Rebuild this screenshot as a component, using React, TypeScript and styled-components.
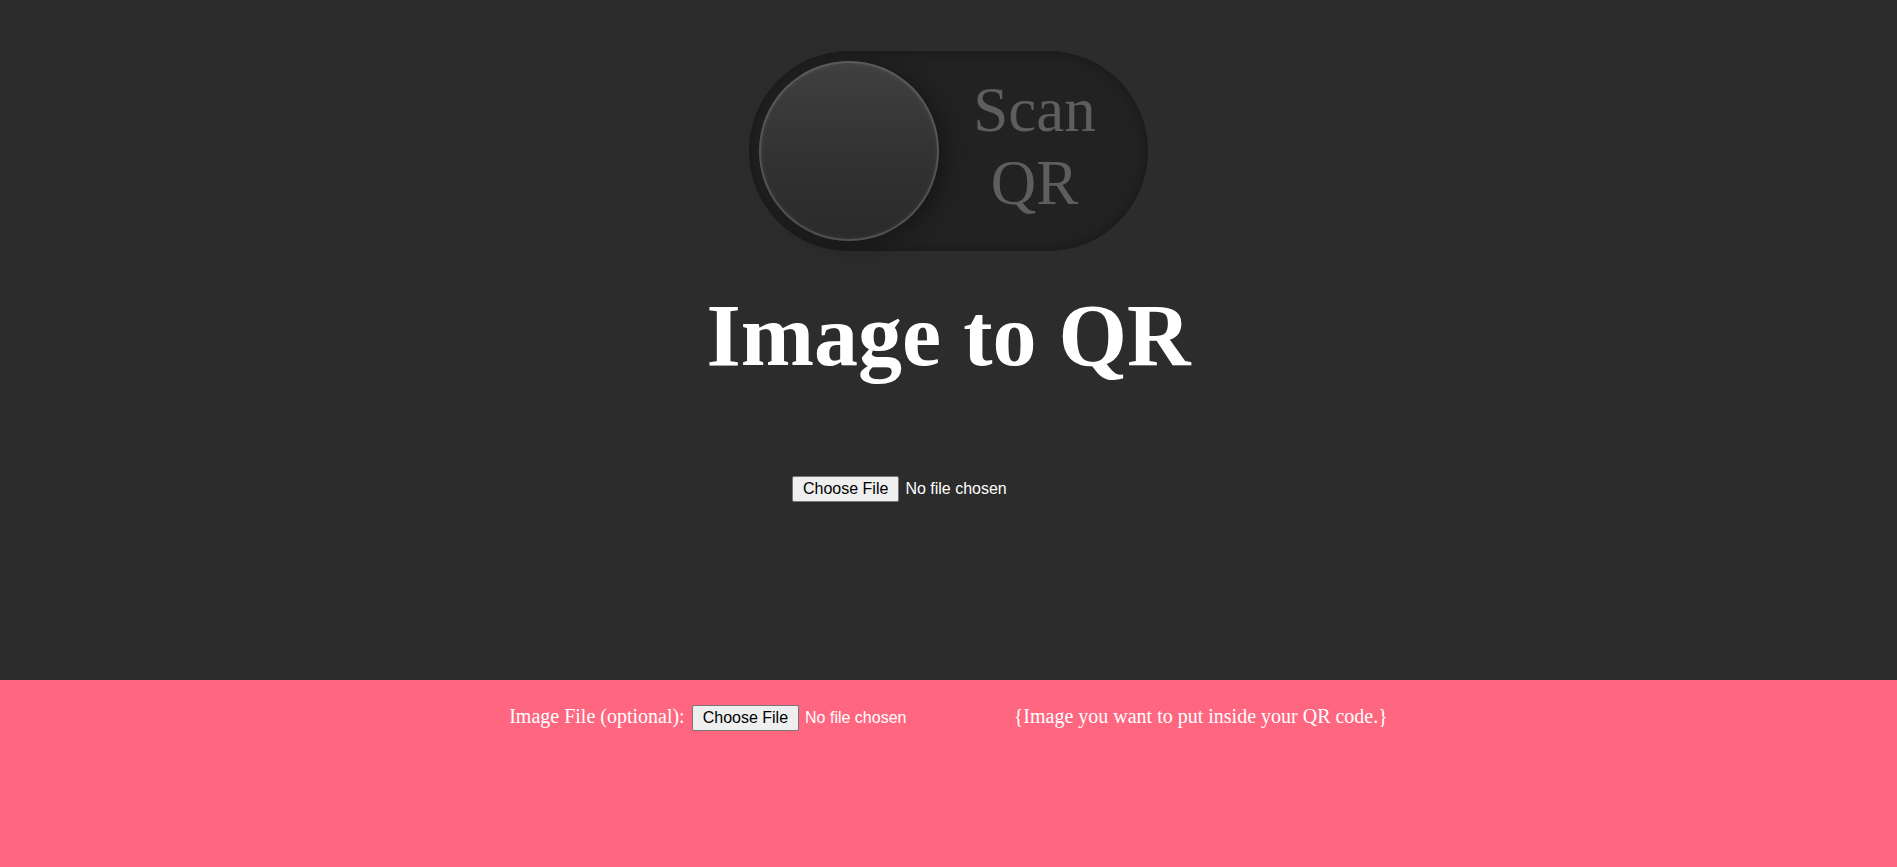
import React from "react";
import styled, { createGlobalStyle } from "styled-components";

const Global = createGlobalStyle`
  html, body { margin: 0; padding: 0; }
  body {
    background: #2c2c2c;
    font-family: "Liberation Serif", "Times New Roman", serif;
  }
`;

const Top = styled.section`
  height: 680px;
  background: #2c2c2c;
  display: flex;
  flex-direction: column;
  align-items: center;
  padding-top: 51px;
  box-sizing: border-box;
`;

const Toggle = styled.div`
  width: 399px;
  height: 200px;
  border-radius: 100px;
  background: #222222;
  box-shadow: inset 0 0 14px rgba(0, 0, 0, 0.35);
  padding: 10px;
  box-sizing: border-box;
  display: flex;
  align-items: center;
`;

const Knob = styled.div`
  width: 180px;
  height: 180px;
  border-radius: 50%;
  flex: none;
  background: linear-gradient(180deg, #404040 0%, #333333 50%, #2a2a2a 100%);
  box-shadow: inset 0 0 0 2px rgba(110, 110, 110, 0.5), inset 0 0 4px 3px rgba(255, 255, 255, 0.05),
    8px 4px 22px rgba(0, 0, 0, 0.35);
`;

const ToggleLabel = styled.div`
  flex: 1;
  text-align: center;
  color: #5e5e5e;
  font-size: 63px;
  line-height: 73px;
  padding-right: 8px;
  padding-bottom: 9px;
`;

const Title = styled.h1`
  margin: 34px 0 0;
  color: #ffffff;
  font-size: 88px;
  font-weight: bold;
  line-height: 101px;
`;

const FileInput = styled.input`
  width: 313px;
  font-family: "Liberation Sans", Arial, sans-serif;
  font-size: 16px;
  color: #ffffff;

  &::file-selector-button {
    font-family: "Liberation Sans", Arial, sans-serif;
    font-size: 16px;
    color: #000000;
    background: #efefef;
    border: 1px solid #767676;
    border-radius: 2px;
    padding: 3px 10px;
    margin-right: 6px;
  }
`;

const TopFile = styled(FileInput)`
  margin-top: 90px;
`;

const Bottom = styled.section`
  height: 187px;
  background: #ff6680;
  display: flex;
  justify-content: center;
  align-items: baseline;
  padding-top: 25px;
  box-sizing: border-box;
  color: #ffffff;
  font-size: 20px;
`;

const Label = styled.label`
  margin-right: 7px;
`;

const Hint = styled.span`
  margin-left: 9px;
`;

export default function App() {
  return (
    <>
      <Global />
      <Top>
        <Toggle>
          <Knob />
          <ToggleLabel>
            Scan
            <br />
            QR
          </ToggleLabel>
        </Toggle>
        <Title>Image to QR</Title>
        <TopFile type="file" />
      </Top>
      <Bottom>
        <Label>Image File (optional):</Label>
        <FileInput type="file" />
        <Hint>{"{Image you want to put inside your QR code.}"}</Hint>
      </Bottom>
    </>
  );
}
